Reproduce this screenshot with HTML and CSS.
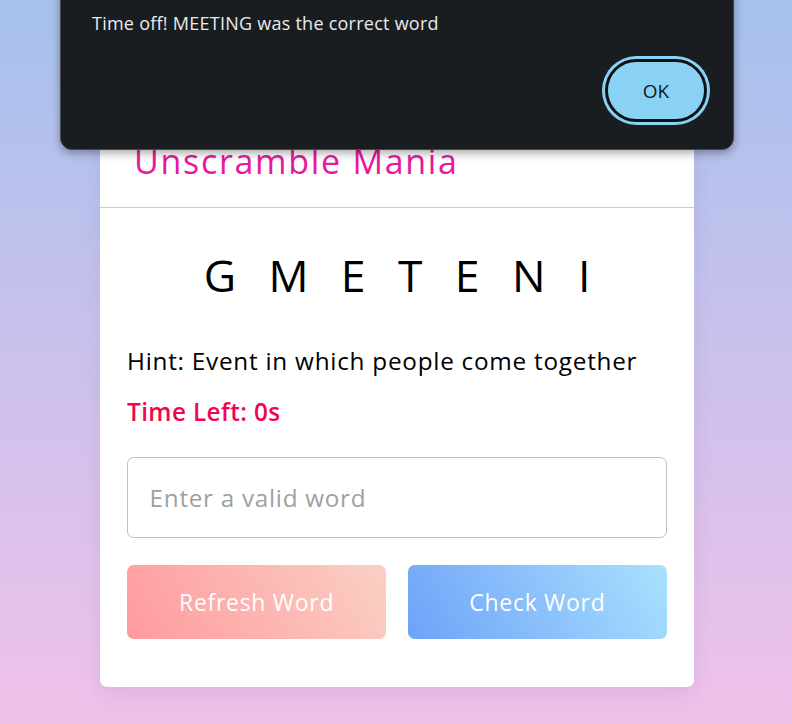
FILE: index.html
```html
<!DOCTYPE html>
<html lang="en">
<head>
<meta charset="utf-8">
<title>Unscramble Mania</title>
<link rel="stylesheet" href="styles.css">
</head>
<body>
  <div class="card">
    <header class="card-header">
      <h2 class="title">Unscramble Mania</h2>
    </header>
    <div class="content">
      <p class="word">GMETENI</p>
      <div class="details">
        <p class="hint">Hint: <span>Event in which people come together</span></p>
        <p class="time">Time Left: <span>0s</span></p>
      </div>
      <input class="answer" type="text" placeholder="Enter a valid word">
      <div class="buttons">
        <button class="btn refresh">Refresh Word</button>
        <button class="btn check">Check Word</button>
      </div>
    </div>
  </div>

  <div class="alert" role="alertdialog">
    <p class="alert-msg">Time off! MEETING was the correct word</p>
    <div class="alert-actions">
      <button class="alert-ok">OK</button>
    </div>
  </div>
</body>
</html>
```

FILE: styles.css
```css
* {
  box-sizing: border-box;
  margin: 0;
  padding: 0;
}

html, body {
  height: 100%;
}

body {
  font-family: "Open Sans", "Noto Sans", sans-serif;
  background: linear-gradient(to bottom, #a6c1ee 0%, #f0c1ea 100%);
  display: flex;
  justify-content: center;
  align-items: flex-start;
  padding-top: 114px;
  padding-left: 2px;
  overflow: hidden;
}

.card {
  width: 594px;
  background: #fff;
  border-radius: 7px;
  box-shadow: 0 10px 20px rgba(60, 40, 90, 0.08);
}

.card-header {
  padding: 22px 34px 21px;
  border-bottom: 1px solid #cccccc;
}

.title {
  font-size: 34px;
  font-weight: 400;
  line-height: 50px;
  letter-spacing: 1.7px;
  color: #e8189f;
}

.content {
  padding: 34px 27px 48px;
}

.word {
  font-size: 44.5px;
  font-weight: 500;
  line-height: 66px;
  text-align: center;
  letter-spacing: 32.4px;
  margin-right: -32.4px;
  color: #000;
}

.details {
  margin: 35px 0 27px;
}

.details p {
  font-size: 24.3px;
  line-height: 36px;
  color: #000;
}

.details .hint {
  margin-bottom: 15px;
  letter-spacing: 0.75px;
}

.details .time {
  color: #f0064f;
  font-weight: 600;
  letter-spacing: 0.4px;
}

.answer {
  display: block;
  width: 100%;
  height: 81px;
  padding: 0 21.6px;
  border: 1px solid #bfbfbf;
  border-radius: 6.75px;
  font-family: inherit;
  font-size: 24.3px;
  letter-spacing: 0.7px;
  outline: none;
}

.answer::placeholder {
  color: #a0a0a0;
}

.buttons {
  display: flex;
  justify-content: space-between;
  gap: 21.6px;
  margin-top: 27px;
}

.btn {
  flex: 1;
  border: none;
  border-radius: 6.75px;
  padding: 20px 0;
  font-family: inherit;
  font-size: 23px;
  line-height: 34px;
  letter-spacing: 0.7px;
  color: #fff;
}

.refresh {
  background: linear-gradient(60deg, #ff9a9e 0%, #fad0c4 100%);
}

.check {
  background: linear-gradient(60deg, #6ea2f8 0%, #a9e1fe 100%);
}

.alert {
  position: absolute;
  left: 60px;
  top: -20px;
  width: 674px;
  height: 170px;
  background: #191d20;
  border: 1px solid #44494e;
  border-radius: 12px;
  box-shadow: 0 3px 10px rgba(0, 0, 0, 0.35);
  display: flex;
  flex-direction: column;
  padding: 29px 26px 27px 31px;
}

.alert-msg {
  font-family: "Open Sans", "Noto Sans", sans-serif;
  font-size: 18px;
  line-height: 26px;
  letter-spacing: 0.25px;
  color: #e8eaed;
}

.alert-actions {
  margin-top: auto;
  display: flex;
  justify-content: flex-end;
}

.alert-ok {
  width: 102px;
  height: 63px;
  border: 3px solid #0e1113;
  border-radius: 32px;
  background: #8ad2f4;
  box-shadow: 0 0 0 3px #8ad2f4;
  font-family: "Open Sans", "Noto Sans", sans-serif;
  font-size: 19px;
  color: #10191f;
}
```
